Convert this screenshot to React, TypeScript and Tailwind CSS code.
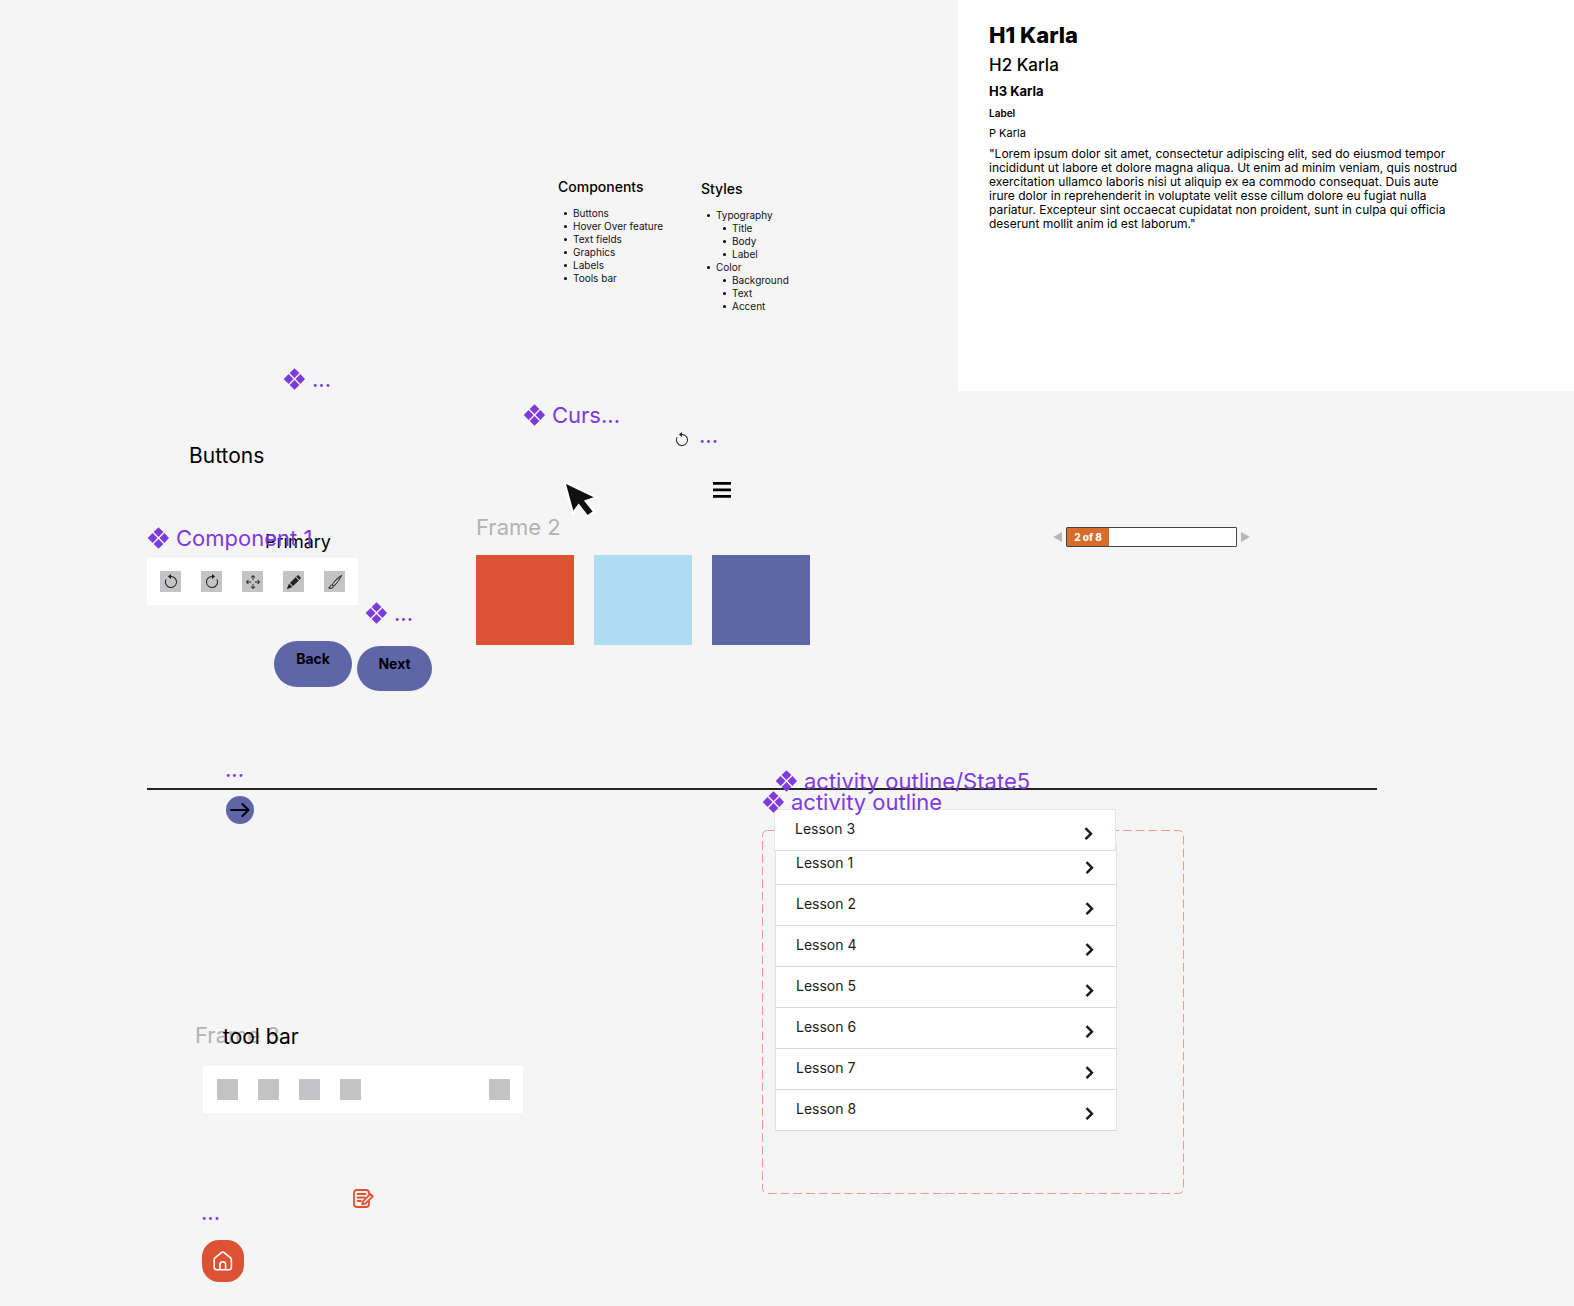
import type { ReactNode } from "react";
import {
  BsArrowClockwise,
  BsArrowCounterclockwise,
  BsArrowsMove,
  BsBrush,
  BsPencilFill,
} from "react-icons/bs";

function ComponentMark() {
  return (
    <svg viewBox="0 0 22 22" className="size-[22px] shrink-0 fill-[#7d3bdc]" aria-hidden="true">
      <path d="M11.5 0.2 16.4 5.1 11.5 10 6.6 5.1Z" />
      <path d="M11.5 12 16.4 16.9 11.5 21.8 6.6 16.9Z" />
      <path d="M5.6 6.1 10.5 11 5.6 15.9 0.7 11Z" />
      <path d="M17.4 6.1 22 11 17.4 15.9 12.5 11Z" />
    </svg>
  );
}

function LayerLabel({ place, mark = true, children }: { place: string; mark?: boolean; children: ReactNode }) {
  return (
    <div
      className={`absolute ${place} flex h-7 items-center gap-[7px] text-[22px] leading-7 whitespace-nowrap text-[#7d3bdc]`}
    >
      {mark && <ComponentMark />}
      <span>{children}</span>
    </div>
  );
}

function Item({ children }: { children: ReactNode }) {
  return (
    <div className="flex items-center gap-[6px]">
      <span className="size-[3px] rounded-full bg-black" />
      <span>{children}</span>
    </div>
  );
}

function Typography() {
  return (
    <section className="absolute top-0 right-0 left-[958px] flex h-[391px] flex-col gap-[6px] bg-white pt-[21px] pl-[31px] text-black">
      <h1 className="text-[22px] leading-7 font-extrabold">H1 Karla</h1>
      <h2 className="text-[17px] leading-5 font-medium">H2 Karla</h2>
      <h3 className="text-[13px] leading-5 font-bold">H3 Karla</h3>
      <p className="text-[10px] leading-3 font-semibold">Label</p>
      <p className="text-[11px] leading-4">P Karla</p>
      <p className="text-[12px] leading-[14px] whitespace-nowrap">
        "Lorem ipsum dolor sit amet, consectetur adipiscing elit, sed do eiusmod tempor
        <br />
        incididunt ut labore et dolore magna aliqua. Ut enim ad minim veniam, quis nostrud
        <br />
        exercitation ullamco laboris nisi ut aliquip ex ea commodo consequat. Duis aute
        <br />
        irure dolor in reprehenderit in voluptate velit esse cillum dolore eu fugiat nulla
        <br />
        pariatur. Excepteur sint occaecat cupidatat non proident, sunt in culpa qui officia
        <br />
        deserunt mollit anim id est laborum."
      </p>
    </section>
  );
}

function Outlines() {
  return (
    <>
      <section className="absolute top-[177px] left-[558px] text-[10px] leading-[13px] text-[#111]">
        <h2 className="mb-[10px] text-[14px] leading-5 font-medium text-black">Components</h2>
        <ul className="pl-[6px]">
          {["Buttons", "Hover Over feature", "Text fields", "Graphics", "Labels", "Tools bar"].map((t) => (
            <li key={t}>
              <Item>{t}</Item>
            </li>
          ))}
        </ul>
      </section>
      <section className="absolute top-[179px] left-[701px] text-[10px] leading-[13px] text-[#111]">
        <h2 className="mb-[10px] text-[14px] leading-5 font-medium text-black">Styles</h2>
        <ul className="pl-[6px]">
          {[
            { name: "Typography", parts: ["Title", "Body", "Label"] },
            { name: "Color", parts: ["Background", "Text", "Accent"] },
          ].map((group) => (
            <li key={group.name}>
              <Item>{group.name}</Item>
              <ul className="pl-[16px]">
                {group.parts.map((t) => (
                  <li key={t}>
                    <Item>{t}</Item>
                  </li>
                ))}
              </ul>
            </li>
          ))}
        </ul>
      </section>
    </>
  );
}

const tools = [
  { name: "Undo", icon: <BsArrowCounterclockwise className="size-4" /> },
  { name: "Redo", icon: <BsArrowClockwise className="size-4" /> },
  { name: "Move", icon: <BsArrowsMove className="size-[14px]" /> },
  { name: "Pencil", icon: <BsPencilFill className="size-[14px]" /> },
  { name: "Brush", icon: <BsBrush className="size-[14px]" /> },
];

function IconBar() {
  return (
    <div className="absolute top-[558px] left-[147px] flex gap-5 bg-white p-[13px]">
      {tools.map((t) => (
        <button
          key={t.name}
          type="button"
          aria-label={t.name}
          className="flex size-[21px] items-center justify-center bg-[#c4c4c6] text-[#222]"
        >
          {t.icon}
        </button>
      ))}
    </div>
  );
}

function BlankBar() {
  return (
    <div className="absolute top-[1066px] left-[203px] flex w-[320px] gap-5 bg-white py-[13px] pr-[13px] pl-[14px]">
      {["Tool 1", "Tool 2", "Tool 3", "Tool 4"].map((t) => (
        <button key={t} type="button" aria-label={t} className="size-[21px] bg-[#c4c4c6]" />
      ))}
      <button type="button" aria-label="Tool 5" className="ml-auto size-[21px] bg-[#c4c4c6]" />
    </div>
  );
}

function Pager() {
  return (
    <div className="absolute top-[527px] left-[1053px] flex items-center gap-1">
      <button type="button" aria-label="Previous">
        <svg viewBox="0 0 9 10" className="h-[10px] w-[9px] fill-[#b8b8b8]">
          <path d="M9 0V10L0 5Z" />
        </svg>
      </button>
      <div className="flex h-5 w-[171px] rounded-[1px] border border-[#444] bg-white">
        <div className="flex w-[42px] items-center justify-center bg-[#d96b2b] text-[10px] leading-3 font-extrabold text-white">
          2 of 8
        </div>
      </div>
      <button type="button" aria-label="Next page">
        <svg viewBox="0 0 9 10" className="h-[10px] w-[9px] fill-[#b8b8b8]">
          <path d="M0 0V10L9 5Z" />
        </svg>
      </button>
    </div>
  );
}

function Lesson({ n }: { n: number }) {
  return (
    <button
      type="button"
      className="flex h-[41px] w-full items-start justify-between border-b border-[#d9d9d9] pt-[9px] pr-[22px] pl-5 text-[14px] leading-5 text-[#1c1c1c]"
    >
      <span>Lesson {n}</span>
      <svg viewBox="0 0 9 14" className="mt-2 h-[14px] w-[9px] fill-none stroke-[#1a1a1a] stroke-[2.4]" aria-hidden="true">
        <path d="M1.5 1.2 7 6.7 1.5 12.2" />
      </svg>
    </button>
  );
}

export default function App() {
  return (
    <main className="relative min-h-[1306px] w-full overflow-hidden bg-[#f5f5f5] font-['Inter',sans-serif]">
      <Typography />
      <Outlines />

      <LayerLabel place="top-[365px] left-[283px]">...</LayerLabel>
      <LayerLabel place="top-[401px] left-[523px]">Curs...</LayerLabel>

      <BsArrowCounterclockwise className="absolute top-[432px] left-[674px] size-4 text-[#222]" />
      <LayerLabel place="top-[421px] left-[699px]" mark={false}>
        ...
      </LayerLabel>

      <svg viewBox="0 0 40 40" className="absolute top-[478px] left-[561px] size-10" aria-hidden="true">
        <path d="M0.7 1 39 20 27.3 22.6 35.6 34.2 26.4 39.4 18.6 29.4 11.4 38.6Z" fill="#fff" />
        <path d="M5 6 32.7 19.3 22.9 22.4 31.6 33.4 26.6 37 17.7 25.4 12.3 32.6Z" fill="#111" />
      </svg>

      <button type="button" aria-label="Menu" className="absolute top-[482px] left-[713px]">
        <svg viewBox="0 0 18 16" className="h-4 w-[18px] fill-black">
          <path d="M0 0h18v2.8H0zM0 6.5h18v2.8H0zM0 13h18v2.8H0z" />
        </svg>
      </button>

      <h2 className="absolute top-[442px] left-[189px] text-[21px] leading-7 text-black">Buttons</h2>
      <p className="absolute top-[528px] left-[265px] text-[18px] leading-7 text-black">Primary</p>
      <LayerLabel place="top-[524px] left-[147px]">Component 1</LayerLabel>
      <IconBar />

      <LayerLabel place="top-[599px] left-[365px]">...</LayerLabel>
      <button
        type="button"
        className="absolute top-[641px] left-[274px] flex h-[46px] w-[78px] items-start justify-center rounded-full bg-[#5e66a8] pt-2 text-[14px] leading-5 font-bold text-black"
      >
        Back
      </button>
      <button
        type="button"
        className="absolute top-[646px] left-[357px] flex h-[45px] w-[75px] items-start justify-center rounded-full bg-[#5e66a8] pt-2 text-[14px] leading-5 font-bold text-black"
      >
        Next
      </button>

      <section className="absolute top-[513px] left-[476px]">
        <h2 className="mb-[14px] text-[22px] leading-7 text-[#b3b3b3]">Frame 2</h2>
        <div className="flex gap-5">
          <div className="h-[90px] w-[98px] bg-[#dd5233]" />
          <div className="h-[90px] w-[98px] bg-[#aedcf2]" />
          <div className="h-[90px] w-[98px] bg-[#5e66a8]" />
        </div>
      </section>

      <Pager />

      <LayerLabel place="top-[755px] left-[225px]" mark={false}>
        ...
      </LayerLabel>
      <hr className="absolute top-[788px] left-[147px] w-[1230px] border-t-2 border-[#222]" />
      <button
        type="button"
        aria-label="Continue"
        className="absolute top-[796px] left-[226px] flex size-7 items-center justify-center rounded-full bg-[#5e66a8]"
      >
        <svg viewBox="0 0 20 14" className="h-[14px] w-5 fill-none stroke-black stroke-[1.9]">
          <path d="M1 7H18.4M12.4 1 18.6 7 12.4 13" strokeLinecap="round" strokeLinejoin="round" />
        </svg>
      </button>

      <svg className="absolute top-[830px] left-[762px] h-[364px] w-[422px] overflow-visible" aria-hidden="true">
        <rect x="0.5" y="0.5" width="421" height="363" rx="5" fill="none" stroke="#f29a86" strokeDasharray="8.7 4" />
      </svg>
      <div className="absolute top-[844px] left-[775px] w-[342px] border border-y-0 border-[#e2e2e2] bg-white">
        {[1, 2, 4, 5, 6, 7, 8].map((n) => (
          <Lesson key={n} n={n} />
        ))}
      </div>
      <div className="absolute top-[809px] left-[774px] w-[342px] border border-b-0 border-[#e6e6e6] bg-white">
        <Lesson n={3} />
      </div>
      <LayerLabel place="top-[767px] left-[775px]">activity outline/State5</LayerLabel>
      <LayerLabel place="top-[788px] left-[762px]">activity outline</LayerLabel>

      <p className="absolute top-[1021px] left-[195px] text-[22px] leading-7 text-[#b3b3b3]">Frame 3</p>
      <h2 className="absolute top-[1023px] left-[223px] text-[21px] leading-7 text-black">tool bar</h2>
      <BlankBar />

      <svg
        viewBox="0 0 21 20"
        className="absolute top-[1189px] left-[353px] h-5 w-[21px] fill-none stroke-[#dd5233] stroke-[1.8]"
        strokeLinecap="round"
        strokeLinejoin="round"
        aria-hidden="true"
      >
        <path d="M16 4.5V4Q16 1 13 1H4Q1 1 1 4V15Q1 18 4 18H13Q16 18 16 15V12.5" />
        <path d="M4.5 5H12.5M4.5 8.5H11.5M4.5 12H8" />
        <path d="M9.3 15.3 10 12.4 17.3 5 19.8 7.4 12.4 14.6Z" />
      </svg>

      <LayerLabel place="top-[1198px] left-[201px]" mark={false}>
        ...
      </LayerLabel>
      <button
        type="button"
        aria-label="Home"
        className="absolute top-[1240px] left-[202px] flex size-[42px] items-center justify-center rounded-[17px] bg-[#dd5233]"
      >
        <svg
          viewBox="0 0 20 20"
          className="size-5 fill-none stroke-white stroke-[1.6]"
          strokeLinecap="round"
          strokeLinejoin="round"
        >
          <path d="M1.2 8.5Q1.2 7.5 2 6.8L8.4 1.6Q9.8 0.5 11.2 1.6L17.6 6.8Q18.4 7.5 18.4 8.5V16.3Q18.4 18.8 15.9 18.8H3.7Q1.2 18.8 1.2 16.3Z" />
          <path d="M7 18.5V13.5Q7 10.8 9.8 10.8T12.6 13.5V18.5" />
        </svg>
      </button>
    </main>
  );
}
